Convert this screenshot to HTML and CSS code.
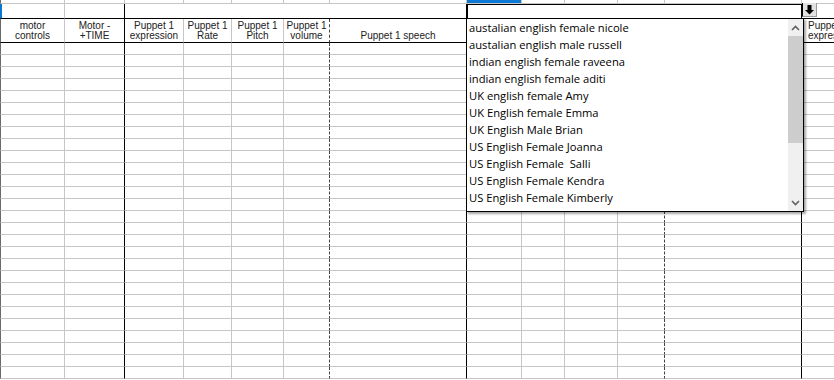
FILE: index.html
```html
<!DOCTYPE html>
<html lang="en">
<head>
  <meta charset="UTF-8">
  <title>Puppet sheet</title>
  <link rel="stylesheet" href="styles.css">
</head>
<body>
  <div class="sheet" id="sheet">
    <!-- row 1 (column header strip, mostly scrolled away) -->
    <div class="cell first g"></div>
    <div class="cell g"></div>
    <div class="cell g"></div>
    <div class="cell g"></div>
    <div class="cell g"></div>
    <div class="cell g"></div>
    <div class="cell g"></div>
    <div class="cell g colsel"></div>
    <div class="cell g"></div>
    <div class="cell g"></div>
    <div class="cell g"></div>
    <div class="cell g"></div>
    <div class="cell n"></div>

    <!-- row 2 -->
    <div class="cell first rowsel g kb"></div>
    <div class="cell k kb"></div>
    <div class="cell k kb span5"></div>
    <div class="cell k kb span5 active"></div>
    <div class="cell n kb"></div>

    <!-- header row -->
    <div class="cell first head g kb"><span>motor<br>controls</span></div>
    <div class="cell head k kb"><span>Motor -<br>+TIME</span></div>
    <div class="cell head g kb"><span>Puppet 1<br>expression</span></div>
    <div class="cell head g kb"><span>Puppet 1<br>Rate</span></div>
    <div class="cell head g kb"><span>Puppet 1<br>Pitch</span></div>
    <div class="cell head d kb"><span>Puppet 1<br>volume</span></div>
    <div class="cell head k kb"><span>Puppet 1 speech</span></div>
    <div class="cell head g kb"></div>
    <div class="cell head g kb"></div>
    <div class="cell head g kb"></div>
    <div class="cell head d kb"></div>
    <div class="cell head k kb"></div>
    <div class="cell head left n kb"><span>Puppet 1<br>expression</span></div>

    <!-- validation dropdown button -->
    <div class="drop-btn">
      <svg width="15" height="14" viewBox="0 0 15 14">
        <rect x="5.5" y="2" width="4" height="5" fill="#000"/>
        <polygon points="3,7 12,7 7.5,11.5" fill="#000"/>
      </svg>
    </div>

    <!-- validation list -->
    <div class="drop-list">
      <ul class="items">
        <li>austalian english female nicole</li>
        <li>austalian english male russell</li>
        <li>indian english female raveena</li>
        <li>indian english female aditi</li>
        <li>UK english female Amy</li>
        <li>UK English female Emma</li>
        <li>UK English Male Brian</li>
        <li>US English Female Joanna</li>
        <li>US English Female&nbsp; Salli</li>
        <li>US English Female Kendra</li>
        <li>US English Female Kimberly</li>
        <li>US English Female Ivy</li>
      </ul>
      <div class="scrollbar">
        <div class="sb-arrow">
          <svg width="9" height="6" viewBox="0 0 9 6"><polyline points="1,5 4.5,1.5 8,5" fill="none" stroke="#606060" stroke-width="1.6"/></svg>
        </div>
        <div class="sb-thumb"></div>
        <div class="sb-arrow down">
          <svg width="9" height="6" viewBox="0 0 9 6"><polyline points="1,1 4.5,4.5 8,1" fill="none" stroke="#606060" stroke-width="1.6"/></svg>
        </div>
      </div>
    </div>
  </div>

  <script>
    document.addEventListener("DOMContentLoaded", function () {
      const sheet = document.querySelector('#sheet');
      const list = document.querySelector('.drop-list');
      // right border style per column: g gray, k black, d dashed, n none
      const borders = ['g', 'k', 'g', 'g', 'g', 'd', 'k', 'g', 'g', 'g', 'd', 'k', 'n'];

      for (let r = 0; r < 28; r++) {
        borders.forEach(function (b, i) {
          const cell = document.createElement('div');
          cell.className = 'cell ' + b + (i === 0 ? ' first' : '');
          sheet.insertBefore(cell, list);
        });
      }
    });
  </script>
</body>
</html>
```

FILE: styles.css
```css
body {
  margin: 0;
  padding: 0;
  background-color: #fff;
  overflow: hidden;
}

.sheet {
  position: relative;
  width: 834px;
  height: 380px;
  overflow: hidden;
  display: grid;
  grid-template-columns: 65px 60px 59px 48px 52px 46px 137px 55px 43px 53px 47px 137px 1fr;
  grid-template-rows: 4px 15px 24px;
  grid-auto-rows: 12px;
  font-family: "Liberation Sans", Arial, sans-serif;
}

.cell {
  box-sizing: border-box;
  border-bottom: 1px solid #c6c6c6;
  border-right: 1px solid #c6c6c6;
  min-width: 0;
}

.cell.first {
  border-left: 1px solid #6a6a6a;
}

.cell.g {
  border-right-color: #c6c6c6;
}

.cell.k {
  border-right-color: #000;
}

.cell.d {
  border-right: 1px dashed #444;
}

.cell.n {
  border-right: none;
}

.cell.kb {
  border-bottom-color: #000;
}

.span5 {
  grid-column: span 5;
}

.colsel {
  background-color: #0a78d4;
}

.cell.rowsel {
  border-left-color: #0a78d4;
  box-shadow: inset 1px 0 0 #0a78d4;
}

.active {
  box-shadow: inset 1px 1px 0 #000;
}

.head {
  display: flex;
  align-items: flex-end;
  justify-content: center;
  padding-bottom: 1px;
  font-size: 10px;
  line-height: 10px;
  color: #222;
  text-align: center;
  white-space: nowrap;
}

.head.left {
  justify-content: flex-start;
  text-align: left;
  padding-left: 6px;
  overflow: hidden;
}

.drop-btn {
  position: absolute;
  left: 802px;
  top: 3px;
  width: 15px;
  height: 14px;
  box-sizing: border-box;
  background-color: #e1e1e1;
  border-left: 1px solid #000;
  border-right: 1px solid #9a9a9a;
  border-bottom: 1px solid #9a9a9a;
}

.drop-btn svg {
  display: block;
  margin-left: -1px;
}

.drop-list {
  position: absolute;
  left: 466px;
  top: 18px;
  width: 338px;
  height: 194px;
  box-sizing: border-box;
  border: 1px solid #000;
  background-color: #fff;
  box-shadow: 2px 2px 2px rgba(0, 0, 0, 0.35);
  display: flex;
  overflow: hidden;
}

.items {
  flex: 1;
  margin: 0;
  padding: 0 0 0 2px;
  list-style: none;
  font-family: "Open Sans", "Noto Sans", sans-serif;
  font-size: 11.2px;
  line-height: 17px;
  color: #000;
  white-space: nowrap;
}

.scrollbar {
  width: 15px;
  background-color: #f0f0f0;
  display: flex;
  flex-direction: column;
}

.sb-arrow {
  height: 17px;
  display: flex;
  align-items: center;
  justify-content: center;
}

.sb-arrow.down {
  margin-top: auto;
}

.sb-thumb {
  height: 107px;
  background-color: #cdcdcd;
}
```
